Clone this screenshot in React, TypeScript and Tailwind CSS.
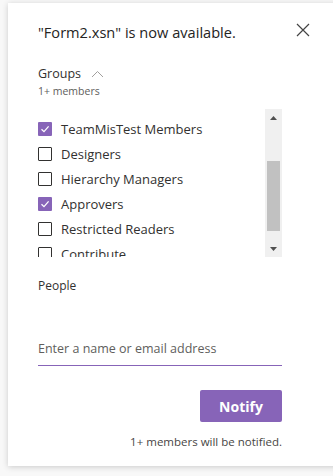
import { useState } from "react";

const groups = [
  { name: "TeamMisTest Members", checked: true },
  { name: "Designers", checked: false },
  { name: "Hierarchy Managers", checked: false },
  { name: "Approvers", checked: true },
  { name: "Restricted Readers", checked: false },
  { name: "Contribute", checked: false },
];

function Checkbox({ checked }: { checked: boolean }) {
  if (checked) {
    return (
      <span className="flex h-[14px] w-[14px] shrink-0 items-center justify-center rounded-[1px] bg-[#8764b8]">
        <svg width="10" height="10" viewBox="0 0 10 10" fill="none">
          <path d="M1.5 5.2 L4 7.6 L8.6 2.4" stroke="white" strokeWidth="1.3" />
        </svg>
      </span>
    );
  }
  return <span className="h-[14px] w-[14px] shrink-0 rounded-[1px] border border-[#323130] bg-white" />;
}

export default function App() {
  const [items] = useState(groups);

  return (
    <div
      className="h-[476px] w-[333px] overflow-hidden bg-[#f8f8f8] pl-2 pt-[3px] text-[#323130]"
      style={{ fontFamily: '"Open Sans", "Noto Sans", sans-serif' }}
    >
      <div className="h-[463px] w-[340px] bg-white pl-[30px] pr-[12px] shadow-[0_1px_6px_rgba(0,0,0,0.18)]">
        {/* Header */}
        <div className="flex items-start justify-between pt-[19px]">
          <h1 className="text-[14.6px] leading-[20px] text-[#252423]">"Form2.xsn" is now available.</h1>
          <button className="mr-[26px] mt-[1px] text-[#444]">
            <svg width="14" height="14" viewBox="0 0 14 14" fill="none">
              <path d="M1 1 L13 13 M13 1 L1 13" stroke="currentColor" strokeWidth="1.2" />
            </svg>
          </button>
        </div>

        {/* Groups */}
        <div className="mt-[23px] flex items-center gap-[10px]">
          <span className="text-[12.5px] leading-[18px]">Groups</span>
          <svg width="13" height="8" viewBox="0 0 13 8" fill="none">
            <path d="M1 7 L6.5 1.5 L12 7" stroke="#a19f9d" strokeWidth="1" />
          </svg>
        </div>
        <div className="mt-[1px] text-[10.5px] leading-[14px] text-[#605e5c]">1+ members</div>

        {/* Group list */}
        <div className="mt-[11px] flex h-[148px] w-[244px]">
          <div className="flex-1 overflow-hidden pt-[7px]">
            {items.map((g) => (
              <div key={g.name} className="flex h-[25px] items-center gap-[9px]">
                <Checkbox checked={g.checked} />
                <span className="text-[13px] leading-[18px]">{g.name}</span>
              </div>
            ))}
          </div>
          <div className="flex w-[17px] flex-col items-center bg-[#f0f0f0]">
            <div className="flex h-[17px] items-center justify-center">
              <svg width="7" height="4" viewBox="0 0 7 4">
                <path d="M0 4 L3.5 0 L7 4 Z" fill="#505050" />
              </svg>
            </div>
            <div className="mt-[35px] h-[70px] w-[13px] bg-[#c1c1c1]" />
            <div className="mt-auto flex h-[17px] items-center justify-center">
              <svg width="7" height="4" viewBox="0 0 7 4">
                <path d="M0 0 L7 0 L3.5 4 Z" fill="#505050" />
              </svg>
            </div>
          </div>
        </div>

        {/* People */}
        <div className="mt-[20px] text-[12px] leading-[18px]">People</div>
        <div className="mt-[40px] w-[244px] border-b border-[#8764b8] pb-[6px]">
          <input
            className="w-full bg-transparent text-[12.5px] leading-[18px] outline-none placeholder:text-[#605e5c]"
            placeholder="Enter a name or email address"
          />
        </div>

        <div className="flex w-[244px] flex-col items-end">
          <button className="mt-[24px] h-[32px] w-[82px] rounded-[2px] bg-[#8764b8] text-[14px] font-bold text-white">
            Notify
          </button>
          <div className="mt-[12px] text-[11.5px] leading-[15px] text-[#484644]">1+ members will be notified.</div>
        </div>
      </div>
    </div>
  );
}
